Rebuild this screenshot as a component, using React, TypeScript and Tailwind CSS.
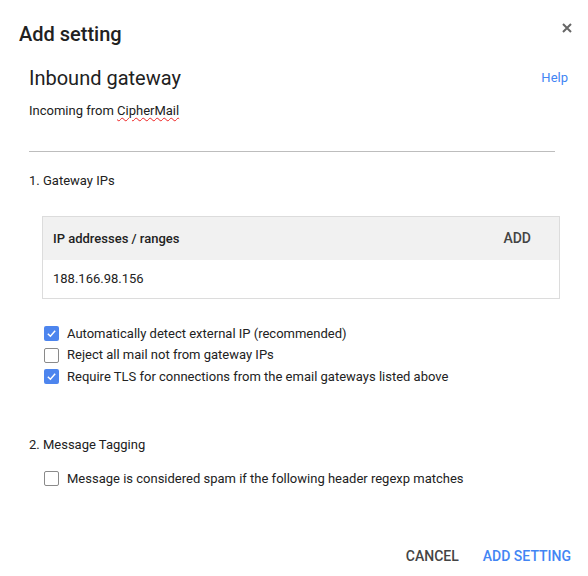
import React from "react"

function Check({ checked, label }: { checked?: boolean; label: string }) {
  return (
    <label className="flex items-center gap-[8px] h-[21px]">
      {checked ? (
        <span className="w-[15px] h-[15px] rounded-[2px] bg-[#4d85ee] flex items-center justify-center">
          <svg width="11" height="11" viewBox="0 0 12 12" fill="none">
            <path d="M2 6.2 L4.8 9 L10 3" stroke="white" strokeWidth="1.6" />
          </svg>
        </span>
      ) : (
        <span className="w-[15px] h-[15px] rounded-[2px] border-[1.5px] border-[#8a8a8a] bg-white" />
      )}
      <span className="text-[13px] text-[#222]">{label}</span>
    </label>
  )
}

export default function App() {
  return (
    <div className="w-[588px] h-[576px] bg-white relative font-['Roboto',sans-serif] text-[#212121]">
      {/* close */}
      <button className="absolute right-[14px] top-[21px] text-[#666]">
        <svg width="14" height="14" viewBox="0 0 14 14">
          <path d="M3 3 L11 11 M11 3 L3 11" stroke="#666" strokeWidth="2" />
        </svg>
      </button>

      <div className="pt-[22px] pl-[19px]">
        <h1 className="text-[20px] font-medium leading-[24px]">Add setting</h1>
      </div>

      <div className="pl-[29px] pr-[33px]">
        <div className="flex items-end justify-between mt-[19px]">
          <h2 className="text-[20px] leading-[26px]">Inbound gateway</h2>
          <a className="text-[13px] text-[#4285f4] mb-[4px] mr-[-13px]">Help</a>
        </div>
        <p className="text-[13px] mt-[11px] leading-[18px]">
          Incoming from{" "}
          <span className="underline decoration-wavy decoration-[#e22] decoration-[1px] underline-offset-[2px]">
            CipherMail
          </span>
        </p>

        <div className="mt-[31px] border-t border-[#bdbdbd]" />

        <div className="mt-[20px] text-[13px] leading-[18px]">1. Gateway IPs</div>

        <div className="ml-[13px] mr-[-5px] mt-[26px] border border-[#dcdcdc]">
          <div className="h-[43px] bg-[#f1f1f1] flex items-center justify-between pl-[10px] pr-[28px]">
            <span className="text-[13px] font-medium text-[#222]">IP addresses / ranges</span>
            <span className="text-[14px] font-medium text-[#444]">ADD</span>
          </div>
          <div className="h-[38px] flex items-center pl-[10px] text-[13px] text-[#222]">
            188.166.98.156
          </div>
        </div>

        <div className="ml-[15px] mt-[24px] flex flex-col gap-[0.5px]">
          <Check checked label="Automatically detect external IP (recommended)" />
          <Check label="Reject all mail not from gateway IPs" />
          <Check checked label="Require TLS for connections from the email gateways listed above" />
        </div>

        <div className="mt-[49px] text-[13px] leading-[18px]">2. Message Tagging</div>

        <div className="ml-[15px] mt-[14px]">
          <Check label="Message is considered spam if the following header regexp matches" />
        </div>
      </div>

      <div className="absolute right-[17px] bottom-[9px] flex gap-[24px] text-[14px] font-medium">
        <button className="text-[#444]">CANCEL</button>
        <button className="text-[#4285f4]">ADD SETTING</button>
      </div>
    </div>
  )
}
